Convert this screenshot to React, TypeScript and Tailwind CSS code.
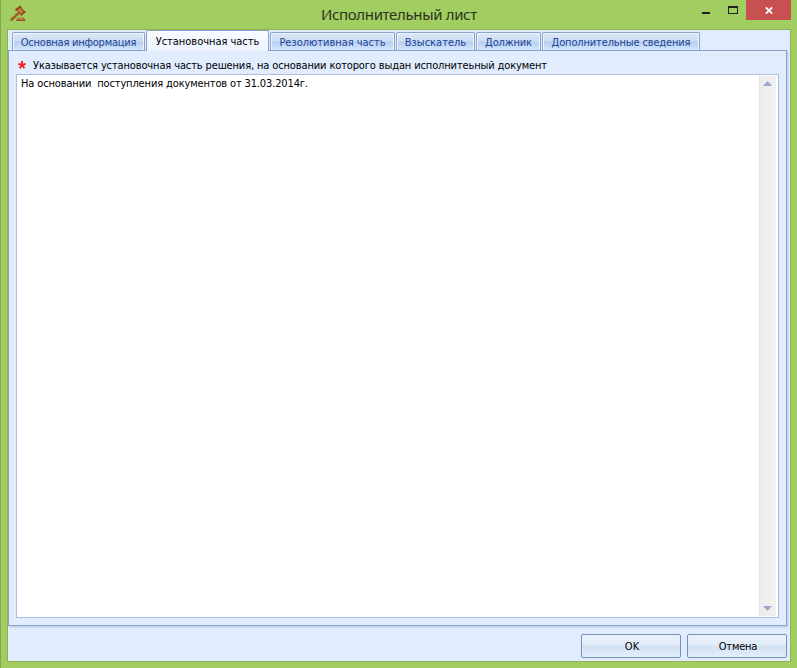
import { useState } from 'react';

const tabs = [
  { id: 'main', label: 'Основная информация', width: 'w-[133px]', spacing: 'tracking-[-0.22px]' },
  { id: 'intro', label: 'Установочная часть', width: 'w-[123px]', spacing: 'tracking-[-0.03px]' },
  { id: 'resolution', label: 'Резолютивная часть', width: 'w-[125px]', spacing: 'tracking-[-0.03px]' },
  { id: 'claimant', label: 'Взыскатель', width: 'w-[79px]', spacing: 'tracking-[0px]' },
  { id: 'debtor', label: 'Должник', width: 'w-[65px]', spacing: 'tracking-[-0.15px]' },
  { id: 'extra', label: 'Дополнительные сведения', width: 'w-[158px]', spacing: 'tracking-[-0.15px]' },
];

function GavelIcon() {
  return (
    <svg width="17" height="17" viewBox="0 0 17 17" fill="none">
      <path d="M1.6 14.6 8.6 7.9" stroke="#8a4a1c" strokeWidth="2.4" strokeLinecap="round" />
      <path d="M1.8 14 8.6 7.4" stroke="#cf8440" strokeWidth="0.9" strokeLinecap="round" />
      <path d="M6.6 4.8 10.6 1.8 14.4 6.8 11 9.4z" fill="#b5652d" stroke="#86431b" strokeWidth="0.8" />
      <path d="M6 4.8 10.4 1.6M11 9.7 14.9 6.8" stroke="#8a451b" strokeWidth="1.8" strokeLinecap="round" />
      <path d="m8.8 4 3.2 4.2" stroke="#d58f50" strokeWidth="1.3" />
      <path d="M7.8 13.2h6l1.4 2.3H6.5z" fill="#b9672e" stroke="#7d3d17" strokeWidth="0.7" />
      <path d="M8.2 13.9h5.2" stroke="#df9c60" strokeWidth="0.8" />
    </svg>
  );
}

function TitleBar() {
  return (
    <header className="relative flex h-[29px] shrink-0 items-start justify-between">
      <div className="pl-[9px] pt-[5px]">
        <GavelIcon />
      </div>
      <h1 className="absolute left-[320px] top-[4px] whitespace-nowrap font-['Noto_Sans',sans-serif] text-[15px] leading-[21px] tracking-[-0.35px] text-[#2b3320]">
        Исполнительный лист
      </h1>
      <div className="flex pr-[6px]">
        <button className="flex h-[20px] w-[25px] items-start pl-[6px] pt-[12px]" aria-label="Свернуть">
          <span className="h-[2px] w-[8px] bg-[#222]" />
        </button>
        <button className="flex h-[20px] w-[25px] items-start pl-[7px] pt-[6px]" aria-label="Развернуть">
          <span className="h-[8px] w-[10px] border border-t-2 border-[#222]" />
        </button>
        <button className="flex h-[20px] w-[45px] items-center justify-center bg-[#c75050]" aria-label="Закрыть">
          <svg width="8" height="7" viewBox="0 0 8 7">
            <path d="m.8.3 6.4 6.4m0-6.4L.8 6.7" stroke="#fff" strokeWidth="1.7" />
          </svg>
        </button>
      </div>
    </header>
  );
}

function DialogButton({ label, spacing }: { label: string; spacing: string }) {
  return (
    <button className={`h-[24px] w-[100px] rounded-[2px] border border-[#7591b9] bg-[linear-gradient(#eaf2fc_0%,#e1ebf7_48%,#d2e1f3_50%,#e3eefb_100%)] pl-[2px] pt-px text-[11px] leading-[14px] text-black ${spacing}`}>
      {label}
    </button>
  );
}

export default function App() {
  const [active, setActive] = useState('intro');
  const [text, setText] = useState('На основании  поступления документов от 31.03.2014г.');

  return (
    <div className="flex h-[668px] w-[797px] flex-col overflow-hidden border-l border-[#86a658] bg-[#a2cd60] font-['DejaVu_Sans_Condensed','DejaVu_Sans',sans-serif] text-[11px] text-black">
      <TitleBar />

      <main className="ml-[6px] flex h-[633px] w-[784px] flex-col border border-[#8fb154] bg-[#e1edff]">
        <nav className="relative z-10 flex h-[20px] shrink-0 items-end gap-px pl-[4px]">
          {tabs.map(tab => (
            <button
              key={tab.id}
              onClick={() => setActive(tab.id)}
              className={`shrink-0 whitespace-nowrap rounded-t-[2px] border border-b-0 border-[#8ba3cb] text-center leading-[14px] ${tab.width} ${tab.spacing} ${
                tab.id === active
                  ? '-mb-px h-[21px] bg-[linear-gradient(#f8faff,#edf4ff)] pt-px text-black'
                  : 'h-[18px] bg-[linear-gradient(#dde9f8_0%,#cbdcf2_48%,#b5cff0_52%,#d4e5fb_100%)] pt-[2px] text-[#1e4395] shadow-[inset_1px_1px_0_#edf5ff,inset_-1px_0_0_#edf5ff]'
              }`}
            >
              {tab.label}
            </button>
          ))}
        </nav>

        <section className="flex h-[576px] w-[779px] shrink-0 flex-col border border-[#8ba3cb] bg-[#e1edff] pl-[7px] shadow-[1px_1px_2px_#b5c5dc]">
          <label className="flex h-[23px] shrink-0 items-center pt-[6px]">
            <svg className="-mt-[2px] ml-[2px]" width="8" height="8" viewBox="0 0 8 8" fill="none">
              <path d="M4 0v4L.3 2.8M4 4l3.7-1.2M4 4 1.6 7.3M4 4l2.4 3.3" stroke="#f51d24" strokeWidth="1.9" />
            </svg>
            <span className="ml-[7px] whitespace-nowrap leading-[15px] tracking-[-0.13px]">
              Указывается установочная часть решения, на основании которого выдан исполнитеьный документ
            </span>
          </label>

          <div className="flex h-[544px] w-[763px] shrink-0 border border-[#a9c0e2] bg-white">
            <textarea
              value={text}
              onChange={e => setText(e.target.value)}
              spellCheck={false}
              className="min-w-0 flex-1 resize-none overflow-hidden pl-[4px] pt-[2px] leading-[14px] tracking-[-0.14px] outline-none"
            />
            <div className="my-px mr-[2px] flex w-[17px] flex-col items-center justify-between border-l border-[#e4e4e4] bg-[linear-gradient(90deg,#ececec,#f1f1f1)] py-[5px] pr-px">
              <svg width="9" height="5" viewBox="0 0 9 5">
                <path d="M4.5 0 9 5H0z" fill="#9ca8cb" />
              </svg>
              <svg width="9" height="5" viewBox="0 0 9 5">
                <path d="M0 0h9L4.5 5z" fill="#9ca8cb" />
              </svg>
            </div>
          </div>
        </section>

        <footer className="flex shrink-0 justify-end gap-[6px] pr-[3px] pt-[8px]">
          <DialogButton label="OK" spacing="tracking-normal" />
          <DialogButton label="Отмена" spacing="tracking-[-0.2px]" />
        </footer>
      </main>
    </div>
  );
}
